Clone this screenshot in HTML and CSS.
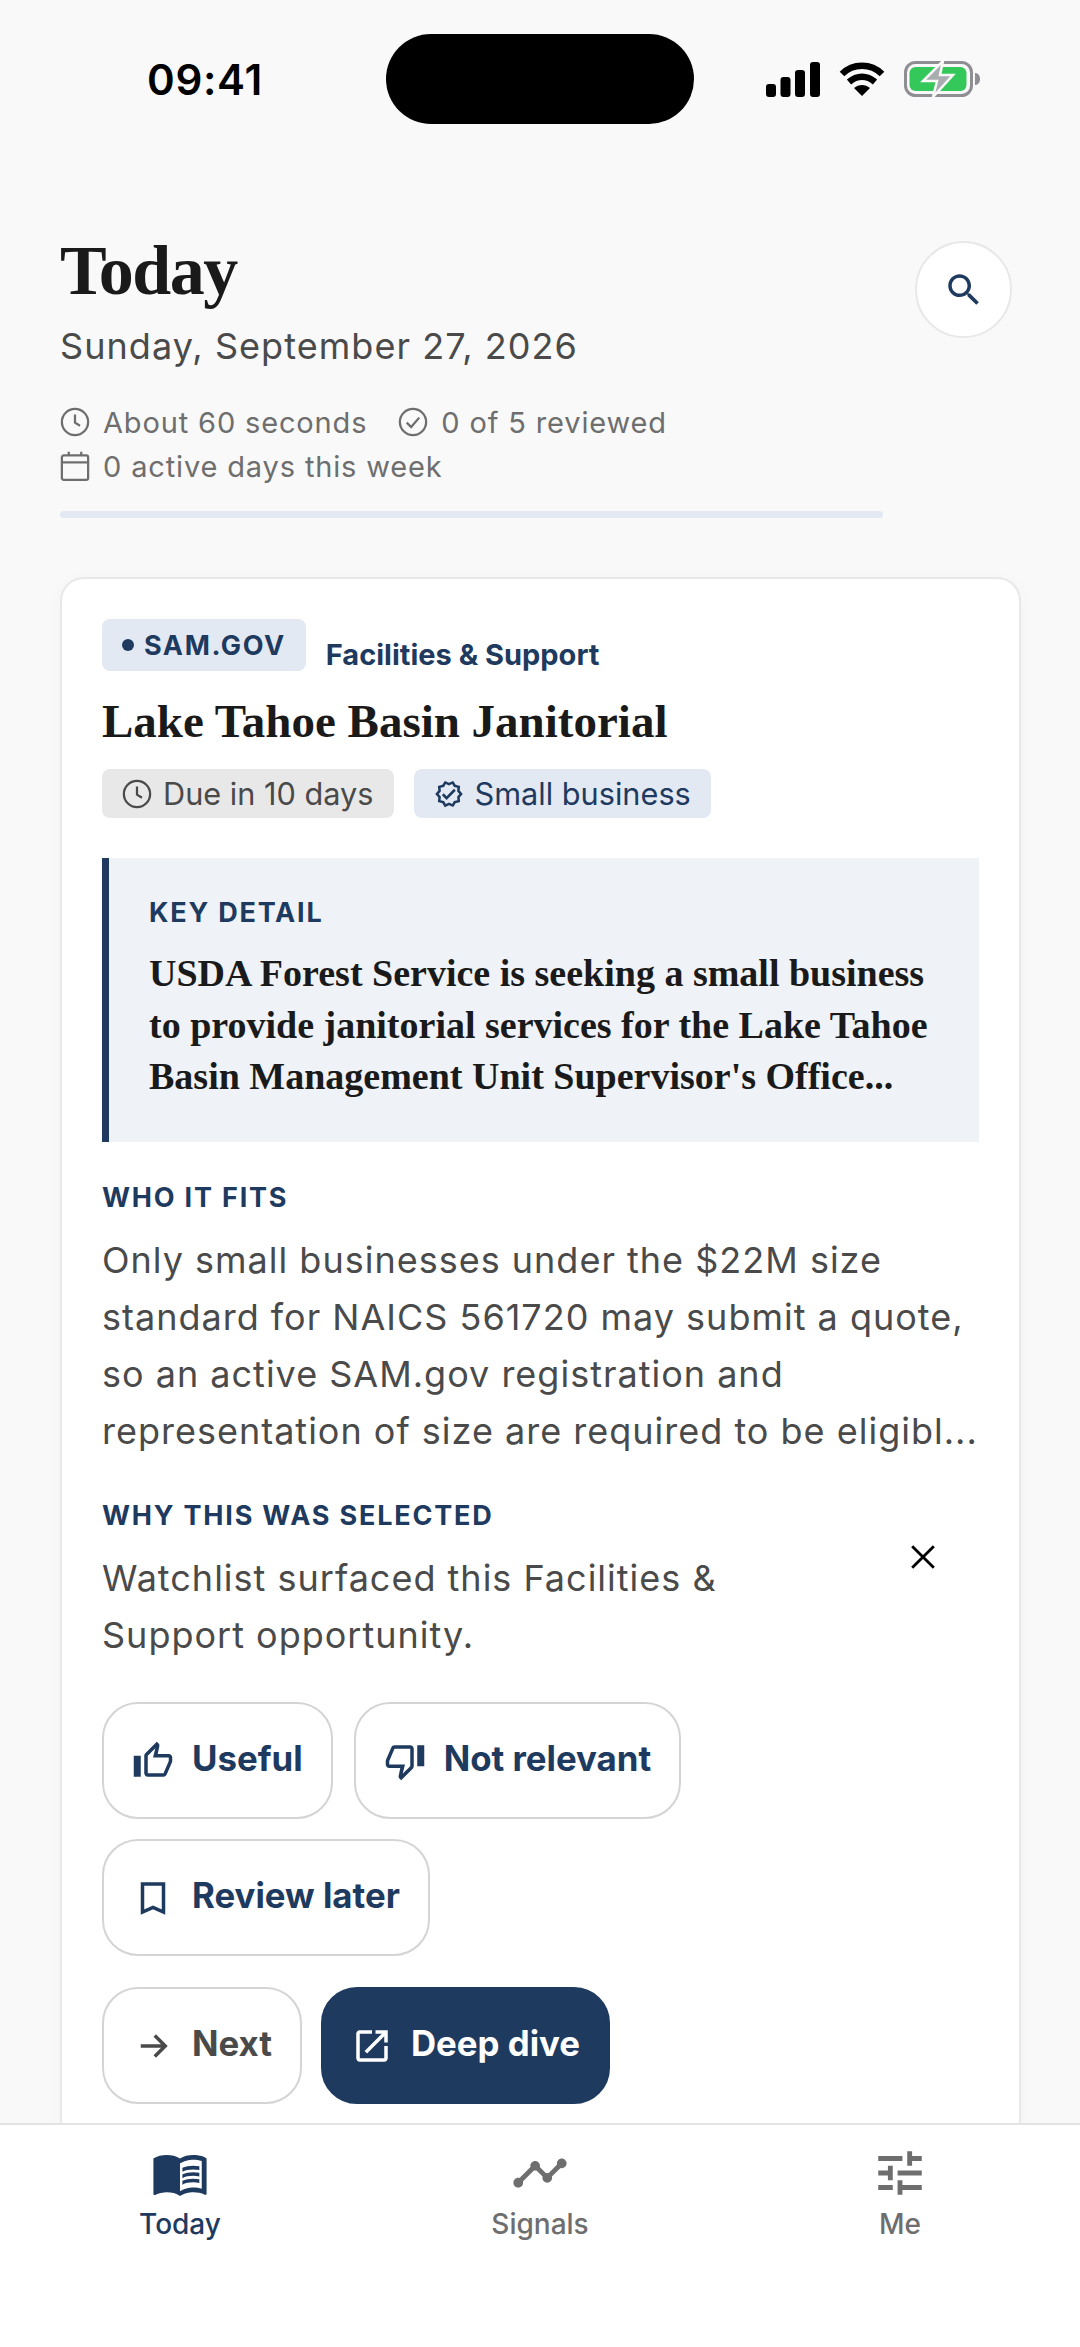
FILE: index.html
```html
<!DOCTYPE html>
<html lang="en">
<head>
    <meta charset="UTF-8">
    <meta name="viewport" content="width=device-width, initial-scale=1.0">
    <title>Today</title>
    <link rel="stylesheet" href="styles.css">
</head>
<body>
    <div class="status-bar">
        <span class="time">09:41</span>
        <div class="island"></div>
        <div class="status-icons">
            <svg class="ic-signal" viewBox="0 0 54 35"><rect x="0" y="22" width="10" height="13" rx="3"/><rect x="14.500" y="15" width="10" height="20" rx="3"/><rect x="29" y="8" width="10" height="27" rx="3"/><rect x="44" y="0" width="10" height="35" rx="3"/></svg>
            <svg class="ic-wifi" viewBox="0 0 46 34"><path d="M3 12C14 1 32 1 43 12" fill="none" stroke="#000" stroke-width="6.500"/><path d="M10 20c8-7 18-7 26 0" fill="none" stroke="#000" stroke-width="6.500"/><path d="M15 26c5-4 11-4 16 0l-8 8z"/></svg>
            <svg class="ic-battery" viewBox="0 0 76 36"><rect x="1.500" y="1.500" width="66" height="33" rx="10" fill="none" stroke="#8e8e93" stroke-width="3"/><rect x="5.500" y="6" width="57" height="24" rx="6" fill="#34c759"/><path d="M71 12c3 0 5 2.500 5 6s-2 6-5 6z" fill="#8e8e93"/><path d="M39 0L19 20h14l-4 16 20-22H36z" fill="#a9adb0" stroke="#f9f9f9" stroke-width="2.500"/></svg>
        </div>
    </div>

    <main class="content">
        <header class="head">
            <div class="head-top">
                <div>
                    <h1 class="page-title">Today</h1>
                    <p class="date">Sunday, September 27, 2026</p>
                </div>
                <button class="search-btn">
                    <svg viewBox="0 0 24 24"><path d="M15.500 14h-.79l-.28-.27C15.410 12.590 16 11.110 16 9.500 16 5.910 13.090 3 9.500 3S3 5.910 3 9.500 5.910 16 9.500 16c1.610 0 3.090-.59 4.230-1.570l.27.28v.79l5 4.990L20.490 19l-4.990-5zm-6 0C7.010 14 5 11.990 5 9.500S7.010 5 9.500 5 14 7.010 14 9.500 11.990 14 9.500 14z"/></svg>
                </button>
            </div>
            <div class="meta-row">
                <span class="meta">
                    <svg viewBox="0 0 24 24"><circle cx="12" cy="12" r="10.500"/><path d="M12 6v6.500l4 2.500"/></svg>
                    About 60 seconds
                </span>
                <span class="meta">
                    <svg viewBox="0 0 24 24"><circle cx="12" cy="12" r="10.500"/><path d="M7 12.500l3.500 3.500 6.500-7.500"/></svg>
                    0 of 5 reviewed
                </span>
            </div>
            <div class="meta-row">
                <span class="meta">
                    <svg viewBox="0 0 24 24"><rect x="1.500" y="3.500" width="21" height="19.500" rx="1.500"/><path d="M1.500 9h21M7 .5v3M17 .5v3"/></svg>
                    0 active days this week
                </span>
            </div>
            <div class="progress"></div>
        </header>

        <article class="card">
            <div class="source-row">
                <span class="source-chip"><i class="dot"></i>SAM.GOV</span>
                <span class="category">Facilities &amp; Support</span>
            </div>
            <h2 class="card-title">Lake Tahoe Basin Janitorial</h2>
            <div class="tags">
                <span class="tag tag-grey">
                    <svg viewBox="0 0 24 24" class="stroke"><circle cx="12" cy="12" r="10.500"/><path d="M12 6v6.500l4 2.500"/></svg>
                    Due in 10 days
                </span>
                <span class="tag tag-blue">
                    <svg viewBox="0 0 24 24"><path d="M23 11.990l-2.440-2.790.34-3.690-3.610-.82L15.400 1.500 12 2.960 8.600 1.500 6.710 4.690 3.100 5.500l.34 3.700L1 11.990l2.440 2.790-.34 3.700 3.610.82L8.600 22.500l3.400-1.470 3.400 1.460 1.890-3.190 3.610-.82-.34-3.690L23 11.990zm-3.950 1.480l-.56.650.08.850.18 1.950-1.900.43-.84.19-.44.74-.99 1.680-1.780-.77-.8-.34-.79.34-1.780.77-.99-1.670-.44-.74-.84-.19-1.900-.43.18-1.960.08-.85-.56-.65L3.670 12l1.290-1.480.56-.65-.09-.86-.18-1.940 1.900-.43.84-.19.44-.74.99-1.680 1.780.77.8.34.79-.34 1.780-.77.99 1.680.44.74.84.19 1.900.43-.18 1.950-.08.85.56.65 1.290 1.470-1.280 1.470z"/><path d="M10.090 13.750l-2.320-2.330-1.480 1.490 3.800 3.810 7.340-7.360-1.480-1.490z"/></svg>
                    Small business
                </span>
            </div>

            <section class="key-detail">
                <h3 class="label">KEY DETAIL</h3>
                <p class="key-text">USDA Forest Service is seeking a small business<br>to provide janitorial services for the Lake Tahoe<br>Basin Management Unit Supervisor's Office...</p>
            </section>

            <section class="block">
                <h3 class="label">WHO IT FITS</h3>
                <p class="body-text">Only small businesses under the $22M size<br>standard for NAICS 561720 may submit a quote,<br>so an active SAM.gov registration and<br>representation of size are required to be eligibl...</p>
            </section>

            <section class="block block-why">
                <h3 class="label">WHY THIS WAS SELECTED</h3>
                <p class="body-text">Watchlist surfaced this Facilities &amp;<br>Support opportunity.</p>
                <button class="dismiss">
                    <svg viewBox="0 0 24 24"><path d="M2 2l20 20M22 2L2 22"/></svg>
                </button>
            </section>

            <div class="actions">
                <button class="btn">
                    <svg viewBox="0 0 24 24"><path d="M9 21h9c.83 0 1.540-.5 1.840-1.220l3.020-7.050c.09-.23.14-.47.14-.73v-2c0-1.100-.9-2-2-2h-6.310l.95-4.570.03-.32c0-.41-.17-.79-.44-1.060L14.170 1 7.580 7.590C7.220 7.950 7 8.450 7 9v10c0 1.100.9 2 2 2zM9 9l4.340-4.340L12 10h9v2l-3 7H9V9zM1 9h4v12H1z"/></svg>
                    <span class="btn-text">Useful</span>
                </button>
                <button class="btn">
                    <svg viewBox="0 0 24 24"><path d="M15 3H6c-.83 0-1.540.5-1.840 1.220l-3.020 7.050c-.09.23-.14.47-.14.73v2c0 1.100.9 2 2 2h6.310l-.95 4.570-.03.32c0 .41.17.79.44 1.060L9.830 23l6.590-6.590c.36-.36.58-.86.58-1.410V5c0-1.100-.9-2-2-2zm0 12l-4.340 4.340L12 14H3v-2l3-7h9v10zm4-12h4v12h-4z"/></svg>
                    <span class="btn-text">Not relevant</span>
                </button>
                <button class="btn">
                    <svg viewBox="0 0 24 24"><path d="M6 4h12v16l-6-2.600L6 20z" class="outline"/></svg>
                    <span class="btn-text">Review later</span>
                </button>
            </div>
            <div class="actions actions-main">
                <button class="btn btn-next">
                    <svg viewBox="0 0 24 24"><path d="M5 12h14M13 6l6 6-6 6" class="outline"/></svg>
                    <span class="btn-text">Next</span>
                </button>
                <button class="btn btn-primary">
                    <svg viewBox="0 0 24 24"><path d="M19 19H5V5h7V3H5c-1.110 0-2 .9-2 2v14c0 1.100.89 2 2 2h14c1.100 0 2-.9 2-2v-7h-2v7zM14 3v2h3.590l-9.830 9.830 1.410 1.410L19 6.410V10h2V3h-7z"/></svg>
                    <span class="btn-text">Deep dive</span>
                </button>
            </div>
        </article>
    </main>

    <nav class="tabbar">
        <div class="tab active">
            <svg viewBox="0 0 24 24"><path d="M21 5c-1.110-.35-2.330-.5-3.500-.5-1.950 0-4.050.4-5.500 1.500-1.450-1.100-3.550-1.500-5.500-1.500S2.450 4.900 1 6v14.650c0 .25.25.5.5.5.1 0 .15-.05.25-.05C3.100 20.450 5.050 20 6.500 20c1.950 0 4.050.4 5.500 1.500 1.350-.85 3.800-1.500 5.500-1.500 1.650 0 3.350.3 4.750 1.050.1.05.15.05.25.05.25 0 .5-.25.5-.5V6c-.6-.45-1.250-.75-2-1zm0 13.500c-1.100-.35-2.300-.5-3.500-.5-1.700 0-4.150.65-5.500 1.500V8c1.350-.85 3.800-1.500 5.500-1.500 1.200 0 2.400.15 3.500.5v11.500z"/><path d="M2 6.500C3.200 5.600 5 5.200 6.500 5.200s3.600.3 5 1.300V20c-1.400-.9-3.400-1.200-5-1.200S3.300 19.200 2 19.700z"/><path d="M17.500 10.500c.88 0 1.730.09 2.500.26V9.240c-.79-.15-1.640-.24-2.500-.24-1.700 0-3.240.29-4.500.83v1.660c1.130-.64 2.700-.99 4.500-.99zM13 12.490v1.660c1.130-.64 2.700-.99 4.500-.99.88 0 1.730.09 2.500.26V11.900c-.79-.15-1.640-.24-2.500-.24-1.700 0-3.240.3-4.500.83zM17.500 14.330c-1.700 0-3.240.29-4.500.83v1.660c1.130-.64 2.700-.99 4.500-.99.88 0 1.730.09 2.500.26v-1.520c-.79-.16-1.640-.24-2.500-.24z"/></svg>
            <span>Today</span>
        </div>
        <div class="tab">
            <svg viewBox="0 0 24 24"><path d="M23 8c0 1.100-.9 2-2 2-.18 0-.35-.02-.51-.07l-3.560 3.550c.05.16.07.34.07.52 0 1.100-.9 2-2 2s-2-.9-2-2c0-.18.02-.36.07-.52l-2.550-2.550c-.16.05-.34.07-.52.07s-.36-.02-.52-.07l-4.550 4.560c.05.16.07.33.07.51 0 1.100-.9 2-2 2s-2-.9-2-2 .9-2 2-2c.18 0 .35.02.51.07l4.560-4.550C8.020 9.360 8 9.180 8 9c0-1.100.9-2 2-2s2 .9 2 2c0 .18-.02.36-.07.52l2.550 2.550c.16-.05.34-.07.52-.07s.36.02.52.07l3.550-3.560C19.020 8.350 19 8.180 19 8c0-1.100.9-2 2-2s2 .9 2 2z"/></svg>
            <span>Signals</span>
        </div>
        <div class="tab">
            <svg viewBox="0 0 24 24"><path d="M3 17v2h6v-2H3zM3 5v2h10V5H3zm10 16v-2h8v-2h-8v-2h-2v6h2zM7 9v2H3v2h4v2h2V9H7zm14 4v-2H11v2h10zm-6-4h2V7h4V5h-4V3h-2v6z"/></svg>
            <span>Me</span>
        </div>
    </nav>
</body>
</html>
```

FILE: styles.css
```css
* {
    box-sizing: border-box;
}
html, body {
    height: 100%;
}
body {
    margin: 0;
    height: 2347px;
    overflow: hidden;
    display: flex;
    flex-direction: column;
    background-color: #f9f9f9;
    font-family: Inter, "Liberation Sans", sans-serif;
    color: #1a1a1a;
}
h1, h2, h3, p {
    margin: 0;
}
button {
    font-family: inherit;
    cursor: pointer;
}

/* status bar */
.status-bar {
    flex: none;
    height: 124px;
    padding: 34px 0 0 147px;
    display: flex;
    align-items: center;
    position: relative;
}
.time {
    width: 239px;
    font-size: 42px;
    font-weight: 600;
    color: #000;
    letter-spacing: 0.7px;
}
.island {
    width: 308px;
    height: 90px;
    border-radius: 45px;
    background: #000;
}
.status-icons {
    margin-left: 72px;
    display: flex;
    align-items: center;
    gap: 19px;
}
.ic-signal {
    width: 54px;
    height: 35px;
}
.ic-wifi {
    width: 46px;
    height: 34px;
}
.ic-battery {
    width: 76px;
    height: 36px;
}

/* header */
.content {
    flex: 1;
    min-height: 0;
    overflow: hidden;
    padding: 108px 59px 0 60px;
}
.head-top {
    display: flex;
    justify-content: space-between;
    align-items: flex-start;
    padding-right: 9px;
}
.page-title {
    font-family: "Liberation Serif", serif;
    font-size: 70px;
    line-height: 78px;
    font-weight: 700;
    letter-spacing: -1.5px;
    color: #1a1a1a;
}
.date {
    margin-top: 12px;
    font-size: 36px;
    line-height: 48px;
    color: #4a4a4a;
    letter-spacing: 1.05px;
}
.search-btn {
    width: 97px;
    height: 97px;
    margin-top: 9px;
    padding: 0;
    border-radius: 50%;
    border: 2px solid #e8e8e8;
    background: #fff;
    display: flex;
    align-items: center;
    justify-content: center;
}
.search-btn svg {
    width: 42px;
    height: 42px;
    fill: #1e3a5f;
}
.meta-row {
    display: flex;
    gap: 31px;
    height: 44px;
    align-items: center;
}
.head-top + .meta-row {
    margin-top: 30px;
}
.meta {
    display: inline-flex;
    align-items: center;
    gap: 13px;
    font-size: 29px;
    color: #6e6e6e;
    letter-spacing: 0.85px;
}
.meta svg {
    width: 30px;
    height: 30px;
    fill: none;
    stroke: #6e6e6e;
    stroke-width: 1.8;
}
.progress {
    width: 823px;
    height: 7px;
    margin-top: 23px;
    border-radius: 4px;
    background: #e3e9f3;
}

/* card */
.card {
    margin-top: 59px;
    padding: 40px 40px 60px;
    background: #fff;
    border: 2px solid #e8e8e8;
    border-radius: 24px;
    box-shadow: 0 4px 20px rgba(0, 0, 0, 0.03);
}
.source-row {
    display: flex;
    align-items: flex-end;
    gap: 20px;
}
.source-chip {
    display: inline-flex;
    align-items: center;
    gap: 10px;
    height: 52px;
    padding: 0 20px;
    border-radius: 8px;
    background: #e3e9f3;
    color: #1e3a5f;
    font-size: 27px;
    font-weight: 700;
    letter-spacing: 1.6px;
}
.dot {
    width: 12px;
    height: 12px;
    border-radius: 50%;
    background: #1e3a5f;
}
.category {
    font-size: 29px;
    font-weight: 700;
    line-height: 38px;
    color: #1e3a5f;
    margin-bottom: -3px;
}
.card-title {
    margin-top: 20px;
    font-family: "Liberation Serif", serif;
    font-size: 47px;
    line-height: 60px;
    font-weight: 700;
    color: #1a1a1a;
}
.tags {
    margin-top: 18px;
    display: flex;
    gap: 20px;
}
.tag {
    display: inline-flex;
    align-items: center;
    gap: 11px;
    height: 49px;
    padding: 0 20px;
    border-radius: 8px;
    font-size: 30.700px;
}
.tag svg {
    width: 30px;
    height: 30px;
}
.tag-grey {
    background: #e8e8e8;
    color: #4a4a4a;
}
.tag svg.stroke {
    fill: none;
    stroke: #4a4a4a;
    stroke-width: 1.8;
}
.tag-blue {
    background: #e3e9f3;
    color: #1e3a5f;
    fill: #1e3a5f;
}
.key-detail {
    margin-top: 40px;
    height: 284px;
    padding: 39px 40px 0;
    background: #eff2f7;
    border-left: 7px solid #1e3a5f;
}
.label {
    font-size: 27px;
    line-height: 32px;
    font-weight: 700;
    letter-spacing: 1.8px;
    color: #1e3a5f;
}
.key-text {
    margin-top: 19px;
    font-family: "Liberation Serif", serif;
    font-size: 38px;
    line-height: 51.500px;
    font-weight: 700;
    color: #1a1a1a;
    white-space: nowrap;
}
.block {
    margin-top: 40px;
}
.block-why {
    position: relative;
}
.body-text {
    margin-top: 18px;
    font-size: 36px;
    line-height: 57px;
    color: #4a4a4a;
    letter-spacing: 1px;
    white-space: nowrap;
}
.dismiss {
    position: absolute;
    top: 44px;
    right: 43px;
    width: 26px;
    height: 26px;
    padding: 0;
    border: none;
    background: none;
}
.dismiss svg {
    display: block;
    fill: none;
    stroke: #000;
    stroke-width: 2.6;
}

/* buttons */
.actions {
    margin-top: 38px;
    display: flex;
    flex-wrap: wrap;
    gap: 20px 21px;
}
.actions-main {
    margin-top: 31px;
    gap: 19px;
}
.btn {
    display: inline-flex;
    align-items: center;
    gap: 18px;
    height: 117px;
    padding: 0 28px;
    border-radius: 36px;
    border: 2px solid #d4d4d4;
    background: #fff;
    color: #1e3a5f;
    font-size: 34.800px;
    font-weight: 700;
    fill: #1e3a5f;
}
.btn svg {
    width: 42px;
    height: 42px;
}
.btn-text {
    margin-bottom: 5px;
}
.outline {
    fill: none;
    stroke: currentColor;
    stroke-width: 2;
}
.btn-next {
    color: #4a4a4a;
    fill: #4a4a4a;
}
.btn-primary {
    background: #1e3a5f;
    border-color: #1e3a5f;
    color: #fff;
    fill: #fff;
}

/* tab bar */
.tabbar {
    flex: none;
    height: 224px;
    padding-top: 19px;
    background: #fff;
    border-top: 2px solid #e3e3e3;
    display: grid;
    grid-template-columns: repeat(3, 1fr);
    align-items: start;
}
.tab {
    display: flex;
    flex-direction: column;
    align-items: center;
    gap: 4px;
    font-size: 28px;
    line-height: 36px;
    font-weight: 500;
    color: #6e6e6e;
    fill: #6e6e6e;
}
.tab svg {
    width: 58px;
    height: 58px;
}
.tab.active {
    color: #1e3a5f;
    fill: #1e3a5f;
}
```
